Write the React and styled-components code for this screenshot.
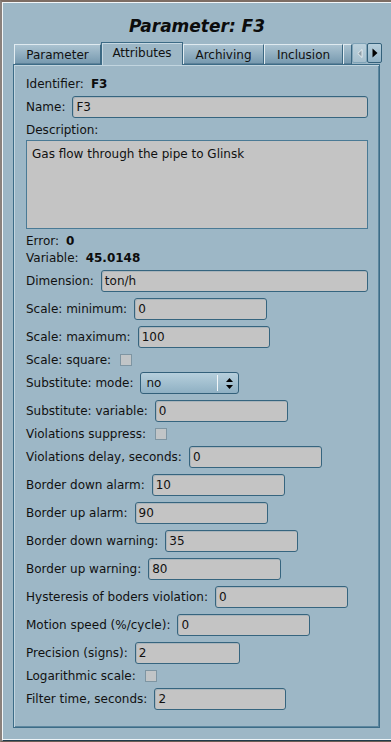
import React from "react";
import styled, { createGlobalStyle } from "styled-components";

const GlobalStyle = createGlobalStyle`
  html, body { margin: 0; padding: 0; }
  body {
    background: #9db7c6;
    font-family: "DejaVu Sans", "Liberation Sans", sans-serif;
    font-size: 12px;
    color: #111;
  }
  * { box-sizing: border-box; }
`;

const Window = styled.div`
  width: 391px;
  height: 742px;
  display: flex;
  flex-direction: column;
  border-top: 2px solid #7d6d64;
  border-left: 2px solid #8a817c;
  border-bottom: 1px solid #6b5d55;
  background: #9db7c6;
`;

const Frame = styled.div`
  flex: 1;
  display: flex;
  flex-direction: column;
  border-top: 1px solid #f3f7f9;
  border-left: 1px solid #f3f7f9;
  border-bottom: 1px solid #1f3a4a;
  box-shadow: inset 0 -1px 0 #eef4f7;
`;

const Title = styled.h1`
  margin: 0;
  padding-top: 12px;
  height: 39px;
  line-height: 22px;
  text-align: center;
  font-size: 17px;
  font-weight: bold;
  font-style: italic;
  color: #0c0c0c;
`;

const TabBar = styled.div`
  display: flex;
  align-items: flex-end;
  height: 22px;
  padding-left: 11px;
  padding-right: 10px;
  position: relative;
  z-index: 1;
`;

const Tab = styled.div`
  height: ${(p) => (p.$active ? "23px" : "20px")};
  margin-bottom: ${(p) => (p.$active ? "-1px" : "0")};
  width: ${(p) => p.$w}px;
  flex: none;
  display: flex;
  align-items: center;
  justify-content: center;
  padding-bottom: ${(p) => (p.$active ? "3px" : "0")};
  white-space: nowrap;
  overflow: hidden;
  font-size: 12px;
  color: #111;
  background: ${(p) =>
    p.$active ? "#9db7c6" : "linear-gradient(#abc3d1, #7598ae)"};
  border-top: 1px solid ${(p) => (p.$active ? "#3c6a85" : "#dfeaf0")};
  border-left: 1px solid ${(p) => (p.$active ? "#3c6a85" : "#e3edf2")};
  border-right: 1px solid #3c6882;
  box-shadow: ${(p) =>
    p.$active ? "inset 1px 1px 0 #c6d8e2" : "inset 0 -1px 0 #5d8199"};
`;

const Spacer = styled.div`
  flex: 1;
`;

const ArrowButton = styled.div`
  width: 15px;
  height: 20px;
  flex: none;
  display: flex;
  align-items: center;
  justify-content: center;
  border: 1px solid ${(p) => (p.$disabled ? "#7fa3b7" : "#34617b")};
  border-radius: 2px;
  background: ${(p) =>
    p.$disabled
      ? "linear-gradient(#bcd1dc, #a6bfcd)"
      : "linear-gradient(#b7cfdc, #93b3c6)"};
  margin-bottom: 1px;
`;

const Panel = styled.div`
  margin: 0 11px 0 10px;
  height: 664px;
  border: 1px solid #3d6c87;
  box-shadow: inset 1px 1px 0 #c2d5df, inset -1px -1px 0 #5d879f;
  padding: 11px 11px 0 12px;
  display: flex;
  flex-direction: column;
`;

const Row = styled.div`
  display: flex;
  align-items: center;
  gap: 7px;
  height: ${(p) => p.$h || 22}px;
  margin-top: ${(p) => p.$mt ?? 6}px;
  line-height: 16px;
  white-space: nowrap;
`;

const Label = styled.span`
  color: #111;
`;

const Value = styled.span`
  font-weight: bold;
  color: #0c0c0c;
`;

const Input = styled.div`
  height: 22px;
  width: ${(p) => (p.$w ? `${p.$w}px` : "auto")};
  flex: ${(p) => (p.$w ? "none" : "1")};
  display: flex;
  align-items: center;
  padding: 0 3px;
  background: #c4c4c4;
  border: 1px solid #36657f;
  border-radius: 3px;
  box-shadow: inset 1px 1px 0 #aab4ba;
  color: #111;
`;

const TextArea = styled.div`
  margin-top: 2px;
  height: 89px;
  padding: 5px 5px;
  line-height: 16px;
  background: #c4c4c4;
  border: 1px solid #4a7a95;
  color: #111;
`;

const CheckBox = styled.span`
  width: 12px;
  height: 12px;
  margin-left: 2px;
  flex: none;
  background: #c1c5c7;
  border: 1px solid #7e95a2;
  display: inline-block;
`;

const Combo = styled.div`
  width: 99px;
  height: 22px;
  display: flex;
  align-items: center;
  border: 1px solid #33607a;
  border-radius: 3px;
  background: linear-gradient(#b6cfdc, #8fb0c3);
  padding-left: 5px;
`;

const ComboText = styled.span`
  flex: 1;
`;

const ComboSep = styled.span`
  width: 1px;
  height: 16px;
  background: #f2f6f8;
  margin-right: 5px;
`;

const ComboArrows = styled.span`
  width: 12px;
  display: flex;
  justify-content: center;
  margin-right: 3px;
`;

function Field({ label, value, w, mt }) {
  return (
    <Row $mt={mt}>
      <Label>{label}</Label>
      <Input $w={w}>{value}</Input>
    </Row>
  );
}

function Check({ label }) {
  return (
    <Row $h={12} $mt={6}>
      <Label>{label}</Label>
      <CheckBox />
    </Row>
  );
}

export default function App() {
  return (
    <>
      <GlobalStyle />
      <Window>
        <Frame>
          <Title>Parameter: F3</Title>
          <TabBar>
            <Tab $w={87}>Parameter</Tab>
            <Tab $w={82} $active>Attributes</Tab>
            <Tab $w={81}>Archiving</Tab>
            <Tab $w={79}>Inclusion</Tab>
            <Tab $w={9} />
            <Spacer />
            <ArrowButton $disabled>
              <svg width="6" height="9" viewBox="0 0 6 9">
                <path d="M5 0.5 L0.8 4.5 L5 8.5 Z" fill="#8d9ea8" stroke="#f4f8fa" strokeWidth="0.8" />
              </svg>
            </ArrowButton>
            <ArrowButton>
              <svg width="6" height="10" viewBox="0 0 6 10">
                <path d="M0.5 0.5 L5.5 5 L0.5 9.5 Z" fill="#000" />
              </svg>
            </ArrowButton>
          </TabBar>
          <Panel>
            <Row $mt={0} $h={16}>
              <Label>Identifier:</Label>
              <Value>F3</Value>
            </Row>
            <Field label="Name:" value="F3" mt={4} />
            <Row $mt={4} $h={16}>
              <Label>Description:</Label>
            </Row>
            <TextArea>Gas flow through the pipe to Glinsk</TextArea>
            <Row $mt={4} $h={16}>
              <Label>Error:</Label>
              <Value>0</Value>
            </Row>
            <Row $mt={1} $h={16}>
              <Label>Variable:</Label>
              <Value>45.0148</Value>
            </Row>
            <Field label="Dimension:" value="ton/h" mt={4} />
            <Field label="Scale: minimum:" value="0" w={133} />
            <Field label="Scale: maximum:" value="100" w={132} />
            <Check label="Scale: square:" />
            <Row>
              <Label>Substitute: mode:</Label>
              <Combo>
                <ComboText>no</ComboText>
                <ComboSep />
                <ComboArrows>
                  <svg width="9" height="13" viewBox="0 0 9 13">
                    <path d="M4.5 1 L8 5 L1 5 Z M4.5 12 L8 8 L1 8 Z" fill="#000" />
                  </svg>
                </ComboArrows>
              </Combo>
            </Row>
            <Field label="Substitute: variable:" value="0" w={133} />
            <Check label="Violations suppress:" />
            <Field label="Violations delay, seconds:" value="0" w={133} />
            <Field label="Border down alarm:" value="10" w={133} />
            <Field label="Border up alarm:" value="90" w={133} />
            <Field label="Border down warning:" value="35" w={133} />
            <Field label="Border up warning:" value="80" w={133} />
            <Field label="Hysteresis of boders violation:" value="0" w={133} />
            <Field label="Motion speed (%/cycle):" value="0" w={133} />
            <Field label="Precision (signs):" value="2" w={105} />
            <Check label="Logarithmic scale:" />
            <Field label="Filter time, seconds:" value="2" w={132} />
          </Panel>
        </Frame>
      </Window>
    </>
  );
}
